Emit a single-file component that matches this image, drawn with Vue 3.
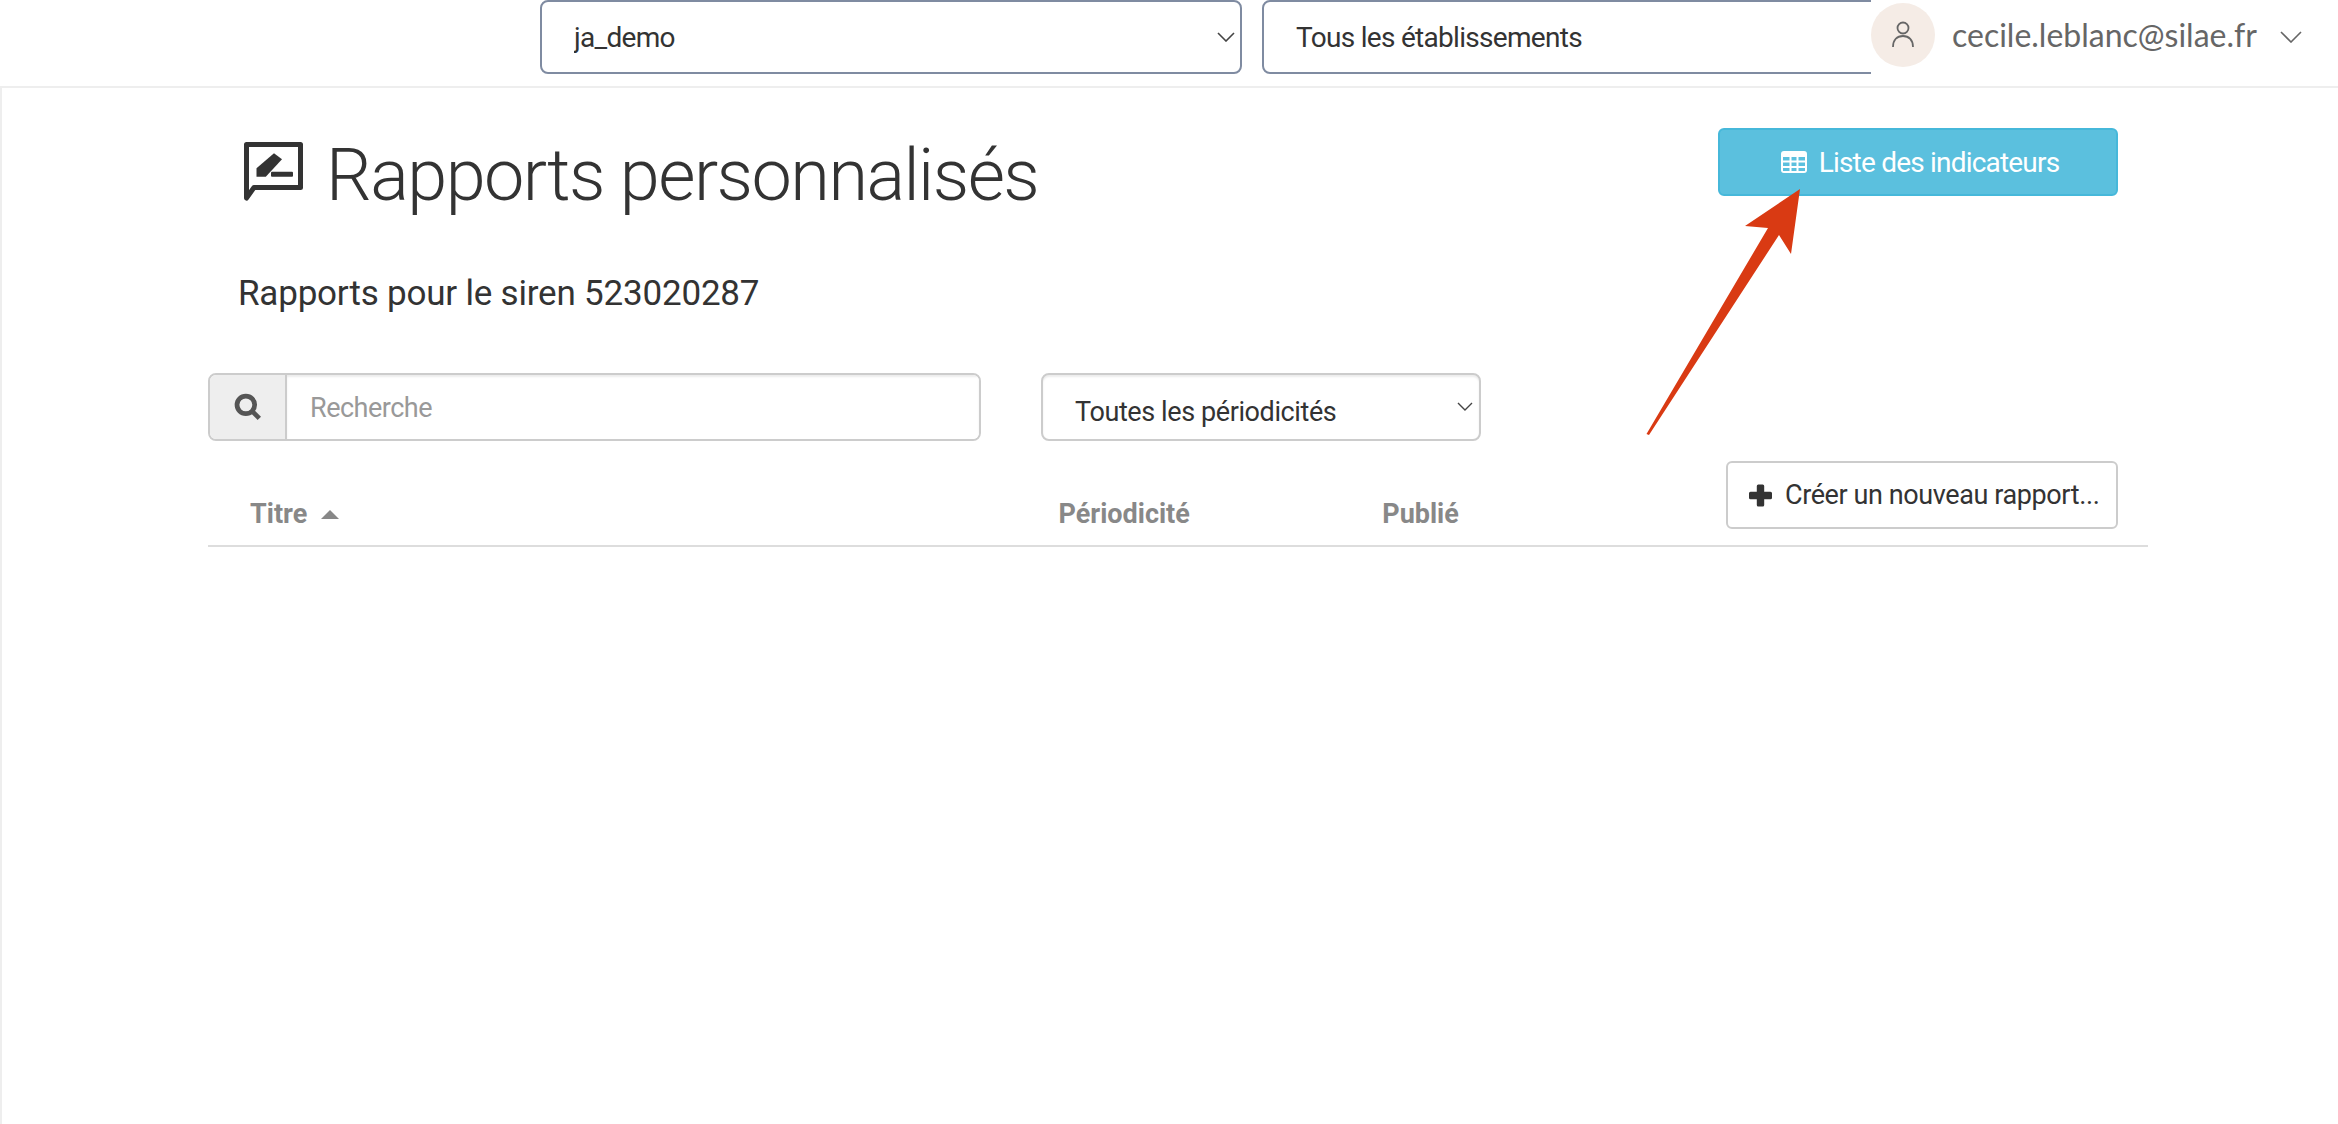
<script setup>
const etablissements = ['Tous les établissements']
const columns = [
  { label: 'Titre', cls: 'col-title', sorted: true },
  { label: 'Périodicité', cls: 'col-period' },
  { label: 'Publié', cls: 'col-pub' }
]
</script>

<template>
  <div class="page">
    <header class="topbar">
      <div class="select-wrap company">
        <select class="top-select"><option>ja_demo</option></select>
        <svg class="chevron" width="18" height="10" viewBox="0 0 18 10"><path d="M1 1l8 8 8-8" /></svg>
      </div>
      <div class="select-wrap establishment">
        <select class="top-select">
          <option v-for="e in etablissements" :key="e">{{ e }}</option>
        </select>
      </div>
      <div class="user">
        <div class="avatar">
          <svg width="24" height="28" viewBox="0 0 24 28" fill="none">
            <circle cx="12" cy="7" r="5.5" />
            <path d="M2 26c0-7 4-11 10-11s10 4 10 11" />
          </svg>
        </div>
        <span class="email">cecile.leblanc@silae.fr</span>
        <svg class="user-chevron" width="22" height="12" viewBox="0 0 22 12"><path d="M1 1l10 10L21 1" /></svg>
      </div>
    </header>

    <main class="content">
      <div class="title-row">
        <div class="title-block">
          <h1 class="page-title">
            <svg class="title-icon" width="60" height="60" viewBox="0 0 60 60">
              <path class="bubble" d="M2.5 2.5H56.5V45.5H10L2.5 56Z" />
              <path class="pen" d="M12.5 34.7V26.3L30 11.3 38 17.3 21.8 34.7Z" />
              <rect class="pen" x="27" y="29.7" width="22" height="5" rx="1" />
            </svg>
            Rapports personnalisés
          </h1>
          <p class="siren">Rapports pour le siren 523020287</p>
        </div>
        <button class="btn-info">
          <svg width="26" height="22" viewBox="0 0 26 22">
            <path fill-rule="evenodd" d="M3 0h20a3 3 0 013 3v16a3 3 0 01-3 3H3a3 3 0 01-3-3V3a3 3 0 013-3zM2 6v3.5h6.5V6zm8.5 0v3.5h5V6zm7 0v3.5H24V6zM2 11.5V15h6.5v-3.5zm8.5 0V15h5v-3.5zm7 0V15H24v-3.5zM2 17v3h6.5v-3zm8.5 0v3h5v-3zm7 0v3H24v-3z" />
          </svg>
          Liste des indicateurs
        </button>
      </div>

      <div class="filters">
        <div class="search-group">
          <span class="addon">
            <svg width="28" height="28" viewBox="0 0 26 26" fill="none">
              <circle cx="11" cy="11" r="8.2" />
              <path d="M17 17l6.5 6.5" />
            </svg>
          </span>
          <input class="search" placeholder="Recherche" />
        </div>
        <div class="select-wrap period">
          <select class="period-select"><option>Toutes les périodicités</option></select>
          <svg class="chevron" width="16" height="9" viewBox="0 0 16 9"><path d="M1 1l7 7 7-7" /></svg>
        </div>
      </div>

      <div class="table-head">
        <div v-for="c in columns" :key="c.label" class="th" :class="c.cls">
          {{ c.label }}<span v-if="c.sorted" class="caret"></span>
        </div>
        <div class="col-action">
          <button class="btn-new">
            <svg width="23" height="23" viewBox="0 0 23 23"><path d="M7.8 2a1.5 1.5 0 011.5-1.5h4.4A1.5 1.5 0 0115.2 2v5.8H21.5A1.5 1.5 0 0123 9.3v4.4a1.5 1.5 0 01-1.5 1.5H15.2V21a1.5 1.5 0 01-1.5 1.5H9.3A1.5 1.5 0 017.8 21v-5.8H1.5A1.5 1.5 0 010 13.7V9.3a1.5 1.5 0 011.5-1.5H7.8z" /></svg>
            Créer un nouveau rapport...
          </button>
        </div>
      </div>
    </main>

    <svg class="arrow" width="170" height="260" viewBox="0 0 170 260">
      <path d="M160 4L105 41 128 43 6.5 249 9 250 139 50 151 69Z" />
    </svg>
  </div>
</template>

<style>
html, body { margin: 0; background: #fff; }
</style>

<style scoped>
.page {
  position: relative;
  width: 2338px;
  height: 1124px;
  overflow: hidden;
  font-family: Roboto, "Noto Sans", sans-serif;
  color: #333;
  background: #fff;
}

.topbar {
  display: flex;
  height: 88px;
  box-sizing: border-box;
  padding-left: 540px;
  border-bottom: 2px solid #eee;
}
.select-wrap { position: relative; }
.company { width: 702px; height: 74px; margin-right: 20px; }
.establishment { width: 609px; height: 74px; overflow: hidden; }
.establishment .top-select { width: 680px; }
.top-select {
  display: block;
  width: 100%;
  height: 74px;
  padding: 0 32px;
  box-sizing: border-box;
  appearance: none;
  background: #fff;
  border: 2px solid #7f8ba1;
  border-radius: 8px;
  font: 400 28px Roboto, sans-serif;
  letter-spacing: -0.7px;
  color: #333;
}
.chevron {
  position: absolute;
  right: 7px;
  top: 32px;
  fill: none;
  stroke: #444;
  stroke-width: 1.6;
}
.user {
  display: flex;
  align-items: flex-start;
  padding-top: 3px;
  background: #fff;
}
.avatar {
  width: 64px;
  height: 64px;
  border-radius: 50%;
  background: #f5ece6;
  display: flex;
  align-items: center;
  justify-content: center;
}
.avatar svg { stroke: #666; stroke-width: 1.8; }
.email {
  margin-left: 17px;
  font: 400 32px/64px Lato, sans-serif;
  color: #666;
}
.user-chevron {
  margin: 28px 0 0 23px;
  fill: none;
  stroke: #666;
  stroke-width: 1.6;
}

.content {
  height: 1036px;
  box-sizing: border-box;
  border-left: 2px solid #eee;
  padding-left: 206px;
  width: 2148px;
}
.title-row {
  display: flex;
  justify-content: space-between;
  align-items: flex-start;
  padding-right: 30px;
}
.title-block { padding-left: 31px; }
.page-title {
  display: flex;
  align-items: center;
  gap: 22px;
  margin: 46px 0 0 5px;
  height: 84px;
  font-size: 72px;
  letter-spacing: -1.55px;
  line-height: 84px;
  font-weight: 300;
  color: #333;
}
.title-icon { flex: none; margin-top: -8px; }
.bubble { fill: none; stroke: #333; stroke-width: 5; stroke-linejoin: round; }
.pen { fill: #333; }
.siren {
  margin: 54px 0 0 -1px;
  font-size: 35px;
  letter-spacing: -0.2px;
  line-height: 44px;
  font-weight: 400;
  color: #333;
}
.btn-info {
  width: 400px;
  height: 68px;
  margin-top: 40px;
  display: flex;
  align-items: center;
  justify-content: center;
  gap: 12px;
  padding: 0 0 0 4px;
  background: #5bc0de;
  border: 2px solid #46b8da;
  border-radius: 6px;
  color: #fff;
  font: 400 28px Roboto, sans-serif;
  letter-spacing: -0.8px;
}
.btn-info svg { fill: #fff; }

.filters {
  display: flex;
  gap: 60px;
  margin-top: 57px;
}
.search-group {
  display: flex;
  width: 773px;
  height: 68px;
  box-sizing: border-box;
  border: 2px solid #ccc;
  border-radius: 8px;
  overflow: hidden;
}
.addon {
  width: 75px;
  flex: none;
  background: #eee;
  border-right: 2px solid #ccc;
  display: flex;
  align-items: center;
  justify-content: center;
}
.addon svg { stroke: #555; stroke-width: 4.4; }
.search {
  flex: 1;
  min-width: 0;
  padding: 2px 23px 0;
  border: 0;
  outline: 0;
  box-shadow: inset 0 2px 2px rgba(0, 0, 0, 0.08);
  font: 400 27px Roboto, sans-serif;
  letter-spacing: -0.5px;
  color: #333;
}
.search::placeholder { color: #999; }
.period { width: 440px; height: 68px; }
.period-select {
  display: block;
  width: 100%;
  height: 68px;
  padding: 9px 32px 0;
  box-sizing: border-box;
  appearance: none;
  background: #fff;
  border: 2px solid #ccc;
  border-radius: 8px;
  box-shadow: inset 0 2px 2px rgba(0, 0, 0, 0.08);
  font: 400 27px Roboto, sans-serif;
  letter-spacing: -0.4px;
  color: #333;
}
.period .chevron { top: 29px; right: 8px; stroke-width: 1.4; }

.table-head {
  display: flex;
  align-items: flex-end;
  margin-top: 20px;
  height: 86px;
  box-sizing: border-box;
  border-bottom: 2px solid #ddd;
}
.th {
  font-size: 27px;
  font-weight: 700;
  line-height: 40px;
  padding-bottom: 11px;
  color: #888;
  box-sizing: border-box;
}
.col-title { width: 851px; padding-left: 42px; }
.col-period { width: 324px; }
.col-pub { width: 344px; }
.caret {
  display: inline-block;
  width: 0;
  height: 0;
  margin-left: 14px;
  vertical-align: 4px;
  border-left: 9px solid transparent;
  border-right: 9px solid transparent;
  border-bottom: 9px solid #888;
}
.col-action {
  flex: 1;
  display: flex;
  justify-content: flex-end;
  align-self: flex-start;
  padding-right: 30px;
}
.btn-new {
  width: 392px;
  height: 68px;
  display: flex;
  align-items: center;
  gap: 13px;
  padding: 0 0 0 21px;
  background: #fff;
  border: 2px solid #ccc;
  border-radius: 6px;
  color: #333;
  font: 400 27px Roboto, sans-serif;
  letter-spacing: -0.4px;
  white-space: nowrap;
}
.btn-new svg { fill: #333; flex: none; }

.arrow {
  position: absolute;
  left: 1640px;
  top: 185px;
}
.arrow path { fill: #d93a13; }
</style>
